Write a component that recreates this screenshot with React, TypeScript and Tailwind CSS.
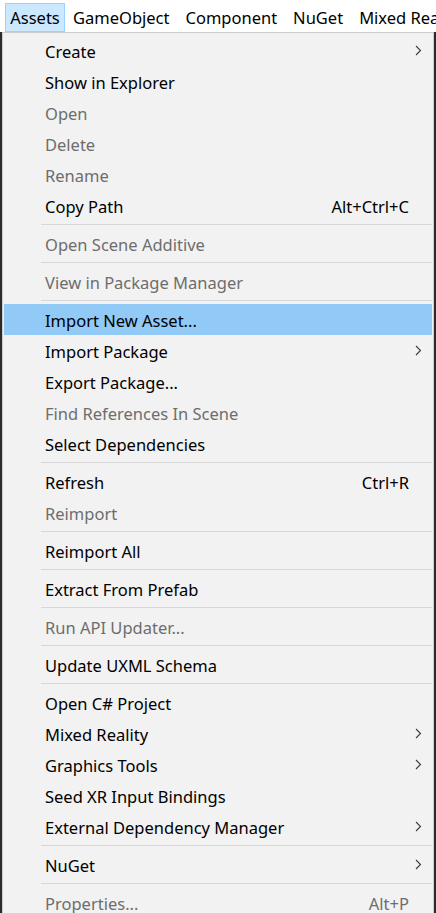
import React from "react";

type Item =
  | { sep: true }
  | { sep?: false; label: string; disabled?: boolean; shortcut?: string; sub?: boolean; active?: boolean };

const items: Item[] = [
  { label: "Create", sub: true },
  { label: "Show in Explorer" },
  { label: "Open", disabled: true },
  { label: "Delete", disabled: true },
  { label: "Rename", disabled: true },
  { label: "Copy Path", shortcut: "Alt+Ctrl+C" },
  { sep: true },
  { label: "Open Scene Additive", disabled: true },
  { sep: true },
  { label: "View in Package Manager", disabled: true },
  { sep: true },
  { label: "Import New Asset...", active: true },
  { label: "Import Package", sub: true },
  { label: "Export Package..." },
  { label: "Find References In Scene", disabled: true },
  { label: "Select Dependencies" },
  { sep: true },
  { label: "Refresh", shortcut: "Ctrl+R" },
  { label: "Reimport", disabled: true },
  { sep: true },
  { label: "Reimport All" },
  { sep: true },
  { label: "Extract From Prefab" },
  { sep: true },
  { label: "Run API Updater...", disabled: true },
  { sep: true },
  { label: "Update UXML Schema" },
  { sep: true },
  { label: "Open C# Project" },
  { label: "Mixed Reality", sub: true },
  { label: "Graphics Tools", sub: true },
  { label: "Seed XR Input Bindings" },
  { label: "External Dependency Manager", sub: true },
  { sep: true },
  { label: "NuGet", sub: true },
  { sep: true },
  { label: "Properties...", disabled: true, shortcut: "Alt+P" },
];

function Chevron() {
  return (
    <svg width="7" height="11" viewBox="0 0 7 11" className="block">
      <polyline points="1,1 5.5,5.5 1,10" fill="none" stroke="#3a3a3a" strokeWidth="1.1" />
    </svg>
  );
}

export default function App() {
  const font = { fontFamily: '"Noto Sans", "Open Sans", sans-serif' };
  return (
    <div className="w-[436px] h-[913px] overflow-hidden bg-white text-[16.5px]" style={font}>
      {/* menu bar */}
      <div className="h-[32px] flex items-start bg-white text-black overflow-hidden">
        <div className="ml-[5px] mt-[3px] h-[29px] w-[60px] shrink-0 flex items-center justify-center pt-[2px] border border-[#99d1ff] bg-[#cce8ff]">
          Assets
        </div>
        <div className="mt-[3px] h-[29px] shrink-0 flex items-center pt-[2px] pl-[8px] gap-[16px] whitespace-nowrap">
          <span className="shrink-0">GameObject</span>
          <span className="shrink-0">Component</span>
          <span className="shrink-0">NuGet</span>
          <span className="shrink-0">Mixed Reality</span>
        </div>
      </div>
      <div className="flex">
        <div className="w-[2px] shrink-0 bg-[#2b2b2b]" />
        <div className="w-[432px] shrink-0 border border-[#cccccc] bg-[#f2f2f2] px-[1px] pt-[2px] pb-[4px]">
          {items.map((it, i) =>
            it.sep ? (
              <div key={i} className="h-[7px] flex items-center pl-[37px]">
                <div className="h-[1px] w-full bg-[#d7d7d7]" />
              </div>
            ) : (
              <div
                key={i}
                className={
                  "h-[31px] flex items-center pl-[41px] pt-[3px] whitespace-nowrap " +
                  (it.active ? "bg-[#91c9f7] " : "") +
                  (it.disabled ? "text-[#6d6d6d]" : "text-black")
                }
              >
                <span className="flex-1">{it.label}</span>
                {it.shortcut ? <span>{it.shortcut}</span> : null}
                <div className="w-[23px] pl-[6px] -mt-[3px] flex items-center">{it.sub ? <Chevron /> : null}</div>
              </div>
            )
          )}
        </div>
        <div className="w-[2px] shrink-0 bg-[#2b2b2b]" />
      </div>
    </div>
  );
}
